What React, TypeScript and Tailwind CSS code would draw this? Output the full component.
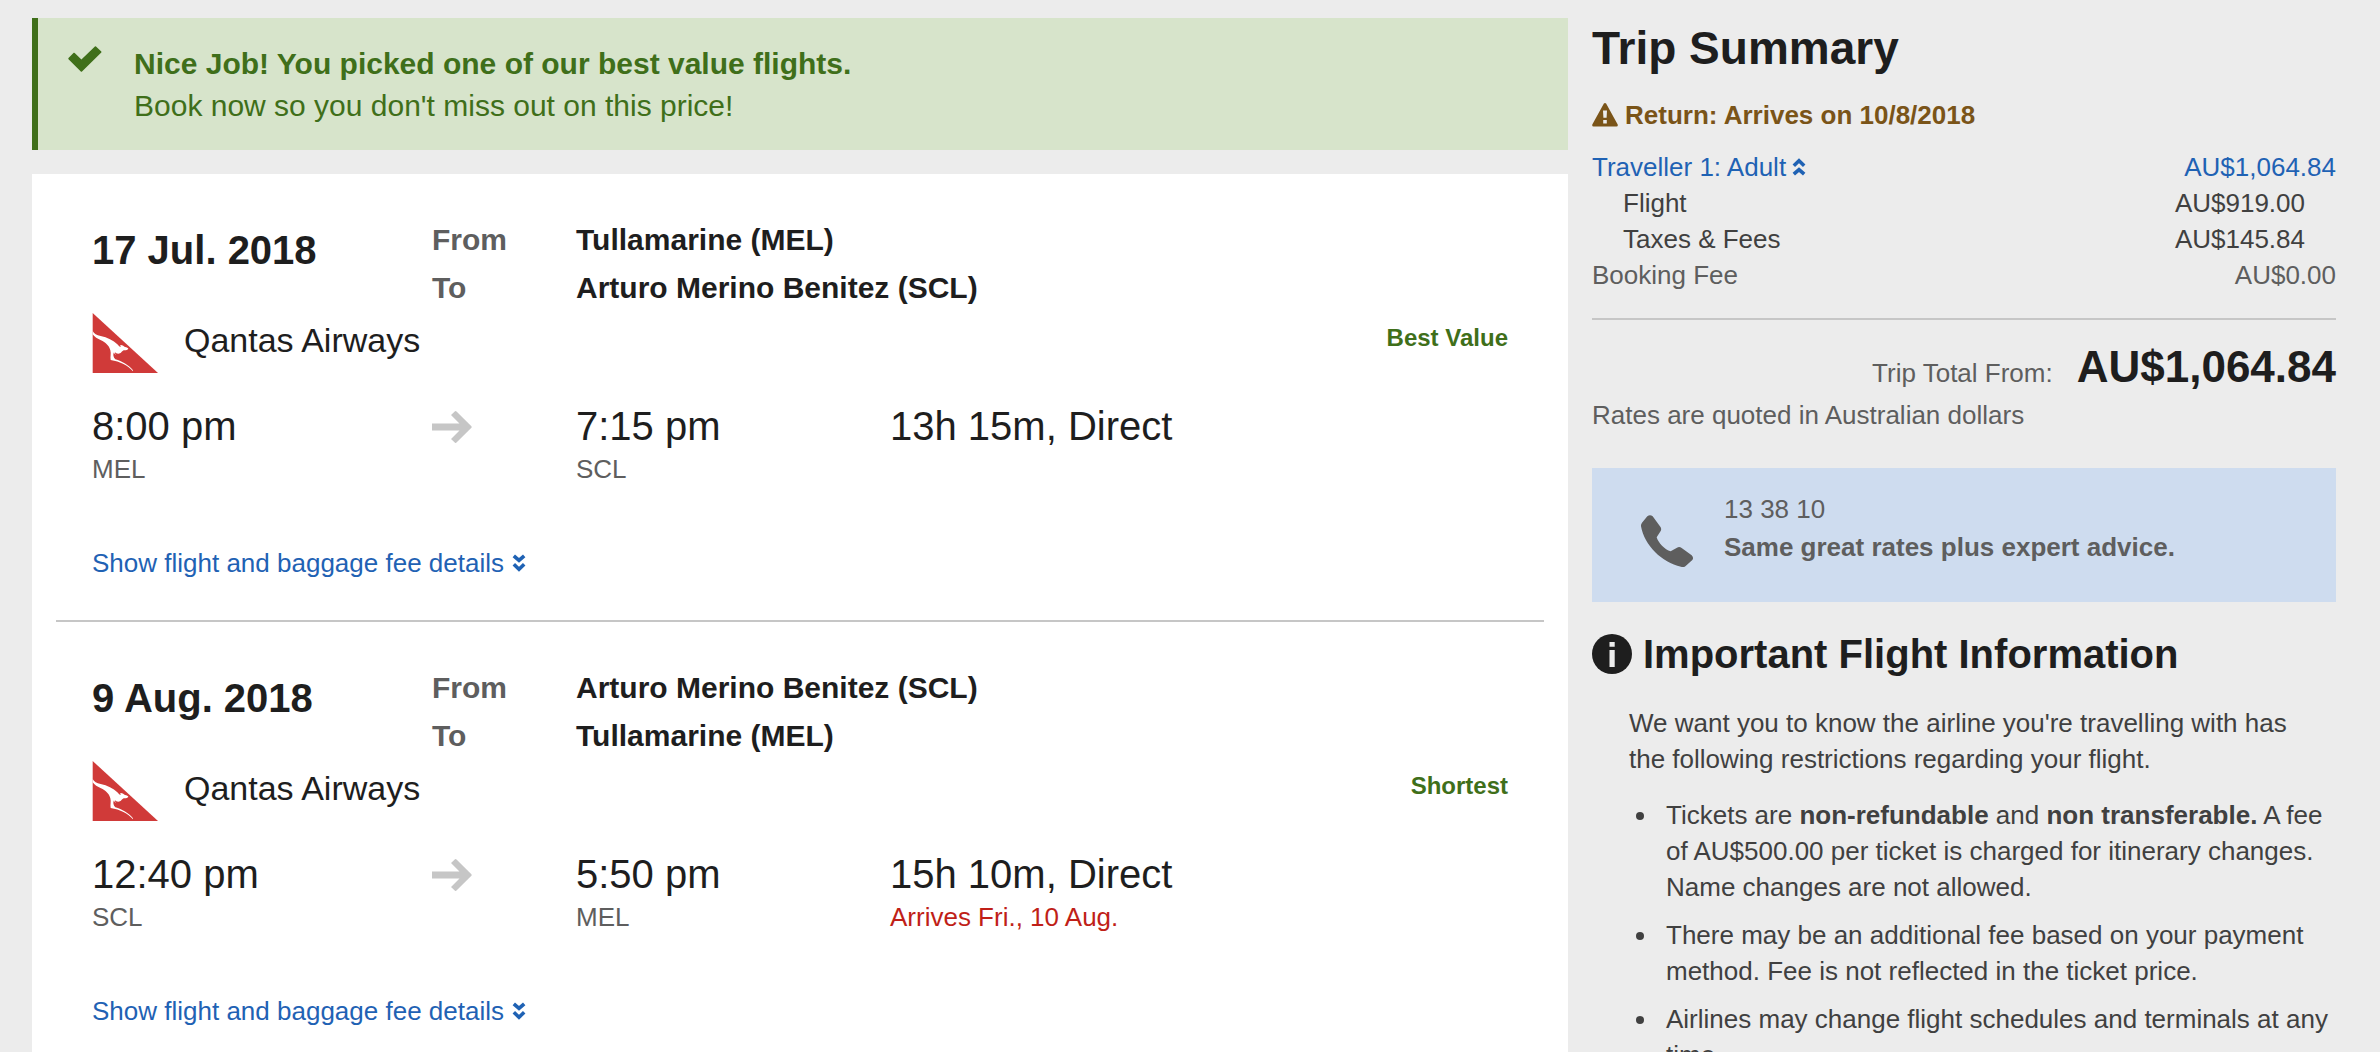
import type { ReactNode } from 'react';

type Leg = {
    date: string;
    from: string;
    to: string;
    badge: string;
    departs: string;
    departCode: string;
    arrives: string;
    arriveCode: string;
    duration: string;
    note?: string;
};

const legs: Leg[] = [
    {
        date: '17 Jul. 2018',
        from: 'Tullamarine (MEL)',
        to: 'Arturo Merino Benitez (SCL)',
        badge: 'Best Value',
        departs: '8:00 pm',
        departCode: 'MEL',
        arrives: '7:15 pm',
        arriveCode: 'SCL',
        duration: '13h 15m, Direct',
    },
    {
        date: '9 Aug. 2018',
        from: 'Arturo Merino Benitez (SCL)',
        to: 'Tullamarine (MEL)',
        badge: 'Shortest',
        departs: '12:40 pm',
        departCode: 'SCL',
        arrives: '5:50 pm',
        arriveCode: 'MEL',
        duration: '15h 10m, Direct',
        note: 'Arrives Fri., 10 Aug.',
    },
];

export default function App() {
    return (
        <div className="min-h-screen bg-[#ececec] pt-[18px] pr-11 pl-8 font-['Liberation_Sans',Arial,sans-serif] text-[26px] leading-9 text-[#5e5e5e]">
            <div className="grid grid-cols-3">
                <main className="col-span-2 flex flex-col gap-6">
                    <ValueBanner />
                    <div className="grow bg-white px-6 pb-6">
                        {legs.map((leg) => (
                            <FlightLeg key={leg.date} leg={leg} />
                        ))}
                    </div>
                </main>
                <aside className="pl-6">
                    <TripSummary />
                    <CallBox />
                    <FlightInfo />
                </aside>
            </div>
        </div>
    );
}

function ValueBanner() {
    return (
        <div className="flex border-l-6 border-[#3f6f1a] bg-[#d7e4cb] pt-[25px] pb-[23px] pl-[30px] text-[30px] leading-[42px] text-[#3f6f1a]">
            <svg className="mt-[3px] mr-8 h-[26px] w-[34px]" viewBox="0 0 34 26" fill="currentColor" aria-hidden="true">
                <path d="M0.5 12 5.7 6.8Q6.2 6.5 6.7 6.9L13.4 13.6 26.9 0.4Q27.5 0 28 0.4L33.3 5.5Q33.7 6 33.3 6.6L14 25.6Q13.4 26 12.8 25.6L0.5 13.2Q0 12.6 0.5 12Z" />
            </svg>
            <div>
                <p className="font-bold">Nice Job! You picked one of our best value flights.</p>
                <p>Book now so you don&apos;t miss out on this price!</p>
            </div>
        </div>
    );
}

function FlightLeg({ leg }: { leg: Leg }) {
    return (
        <section className="border-b-2 border-[#c6c6c6] px-9 pt-[42px] pb-[39px] last:border-b-0">
            <div className="grid grid-cols-[170fr_72fr_466fr]">
                <h2 className="text-[40px] leading-[68px] font-bold text-[#1e1e1e]">{leg.date}</h2>
                <dl className="col-span-2 grid grid-cols-[72fr_466fr] text-[30px] leading-12 font-bold">
                    <dt>From</dt>
                    <dd className="text-[#1e1e1e]">{leg.from}</dd>
                    <dt>To</dt>
                    <dd className="text-[#1e1e1e]">{leg.to}</dd>
                </dl>
            </div>
            <div className="flex h-[60px] items-start">
                <AirlineLogo />
                <span className="ml-[26px] text-[34px] leading-14 text-[#1e1e1e]">Qantas Airways</span>
                <span className="ml-auto text-[24px] leading-[52px] font-bold text-[#3f6f1a]">{leg.badge}</span>
            </div>
            <div className="mt-[30px] grid grid-cols-[170fr_72fr_157fr_309fr]">
                <Stop time={leg.departs}>{leg.departCode}</Stop>
                <svg className="mt-[9px] h-8 w-10" viewBox="0 0 40 32" fill="#c6c6c6" aria-hidden="true">
                    <path d="M0 12.5H27.5L19 4 23 0.3Q23.8 -0.2 24.5 0.4L39.4 15.2Q40 16 39.4 16.8L24.5 31.6Q23.8 32.2 23 31.7L19 28 27.5 19.5H0Z" />
                </svg>
                <Stop time={leg.arrives}>{leg.arriveCode}</Stop>
                <Stop time={leg.duration}>{leg.note && <span className="text-[#c01f18]">{leg.note}</span>}</Stop>
            </div>
            <a href="#details" className="mt-[57px] flex items-center text-[#1f62b4]">
                Show flight and baggage fee details
                <DoubleChevron className="ml-2" />
            </a>
        </section>
    );
}

function Stop({ time, children }: { time: string; children?: ReactNode }) {
    return (
        <div>
            <p className="text-[40px] leading-12 text-[#1e1e1e]">{time}</p>
            <p className="leading-[38px]">{children}</p>
        </div>
    );
}

function AirlineLogo() {
    return (
        <svg className="mt-px h-[60px] w-[66px]" viewBox="0 0 198 180" role="img" aria-label="Qantas">
            <path d="M2 0 198 180H2Z" fill="#d03a39" />
            <path
                d="M2 54C6 62 14 67 26 69C46 73 64 82 76 94C80 99 83 102 87 102C85 100 84 97 86 96C92 97 96 100 99 102C104 103 109 105 109 108C105 112 99 112 95 112C90 115 88 119 84 121C79 123 72 122 69 118C68 121 70 124 73 124C71 125 66 123 66 118C62 125 64 133 70 139C90 145 110 156 123 172V175C108 158 84 145 56 141C54 132 58 122 55 112C51 97 40 88 27 82C17 77 7 72 2 64Z"
                fill="#fff"
            />
        </svg>
    );
}

function DoubleChevron({ className = '' }: { className?: string }) {
    return (
        <svg
            className={`h-[18px] w-[14px] ${className}`}
            viewBox="0 0 14 18"
            fill="none"
            stroke="currentColor"
            strokeWidth="3.6"
            aria-hidden="true"
        >
            <path d="M1.8 1.8 7 6.4 12.2 1.8M1.8 10.3 7 15.2 12.2 10.3" />
        </svg>
    );
}

function TripSummary() {
    return (
        <section>
            <h1 className="text-[46px] leading-[60px] font-bold text-[#1e1e1e]">Trip Summary</h1>
            <p className="mt-[19px] flex items-center font-bold text-[#7a5418]">
                <svg className="mr-[7px] h-6 w-[26px]" viewBox="0 0 26 24" fill="currentColor" aria-hidden="true">
                    <path
                        fillRule="evenodd"
                        d="M11.9 0.6Q13 -0.5 14.1 0.6L25.7 21.6Q26.2 23.5 24.5 23.6H1.5Q-0.2 23.5 0.3 21.6ZM11 7.5 11.4 14.8H14.6L15 7.5ZM11.2 17V20.4H14.8V17Z"
                    />
                </svg>
                Return: Arrives on 10/8/2018
            </p>
            <div className="mt-4">
                <PriceRow amount="AU$1,064.84" className="text-[#1f62b4]">
                    <a href="#traveller" className="flex items-center">
                        Traveller 1: Adult
                        <DoubleChevron className="ml-[6px] rotate-180" />
                    </a>
                </PriceRow>
                <PriceRow amount="AU$919.00" className="px-[31px] text-[#404040]">
                    Flight
                </PriceRow>
                <PriceRow amount="AU$145.84" className="px-[31px] text-[#404040]">
                    Taxes &amp; Fees
                </PriceRow>
                <PriceRow amount="AU$0.00">Booking Fee</PriceRow>
            </div>
            <div className="mt-[25px] flex items-baseline justify-end gap-6 border-t-2 border-[#c6c6c6] pt-[23px]">
                <span>Trip Total From:</span>
                <strong className="text-[44px] leading-[48px] text-[#1e1e1e]">AU$1,064.84</strong>
            </div>
            <p className="mt-[6px]">Rates are quoted in Australian dollars</p>
        </section>
    );
}

function PriceRow({ amount, className = '', children }: { amount: string; className?: string; children: ReactNode }) {
    return (
        <div className={`flex justify-between ${className}`}>
            <span>{children}</span>
            <span>{amount}</span>
        </div>
    );
}

function CallBox() {
    return (
        <div className="mt-[35px] flex bg-[#cedcef] pt-[22px] pb-[35px] pl-[49px] leading-[38px]">
            <svg className="mt-[25px] mr-[31px] h-[52px] w-[52px]" viewBox="0 0 156 156" fill="#5e5e5e" aria-hidden="true">
                <path d="M19 4Q27 -3 35 4L59 37Q62 43 59 48L47 67C52 84 71 104 89 109L108 98Q115 94 122 99L152 121Q159 128 154 135L134 153Q129 158 120 155C63 143 10 91 0 34Q-1 29 3 23Z" />
            </svg>
            <div>
                <p>13 38 10</p>
                <p className="font-bold">Same great rates plus expert advice.</p>
            </div>
        </div>
    );
}

function FlightInfo() {
    return (
        <section className="mt-6 text-[#404040]">
            <h2 className="flex items-center text-[40px] leading-14 font-bold text-[#1e1e1e]">
                <svg className="mr-[11px] h-10 w-10" viewBox="0 0 40 40" aria-hidden="true">
                    <circle cx="20" cy="20" r="20" fill="#1e1e1e" />
                    <path d="M17.5 8H22.7V12.7H17.5ZM17.5 16H22.7V33H17.5Z" fill="#ececec" />
                </svg>
                Important Flight Information
            </h2>
            <div className="mt-[23px] pl-[37px]">
                <p className="pr-8">
                    We want you to know the airline you&apos;re travelling with has the following restrictions regarding your flight.
                </p>
                <ul className="mt-5 flex list-disc flex-col gap-3 pl-[30px]">
                    <li className="pl-[7px]">
                        Tickets are <b>non-refundable</b> and <b>non transferable.</b> A fee of AU$500.00 per ticket is charged for
                        itinerary changes. Name changes are not allowed.
                    </li>
                    <li className="pl-[7px]">
                        There may be an additional fee based on your payment method. Fee is not reflected in the ticket price.
                    </li>
                    <li className="pl-[7px]">Airlines may change flight schedules and terminals at any time.</li>
                </ul>
            </div>
        </section>
    );
}
